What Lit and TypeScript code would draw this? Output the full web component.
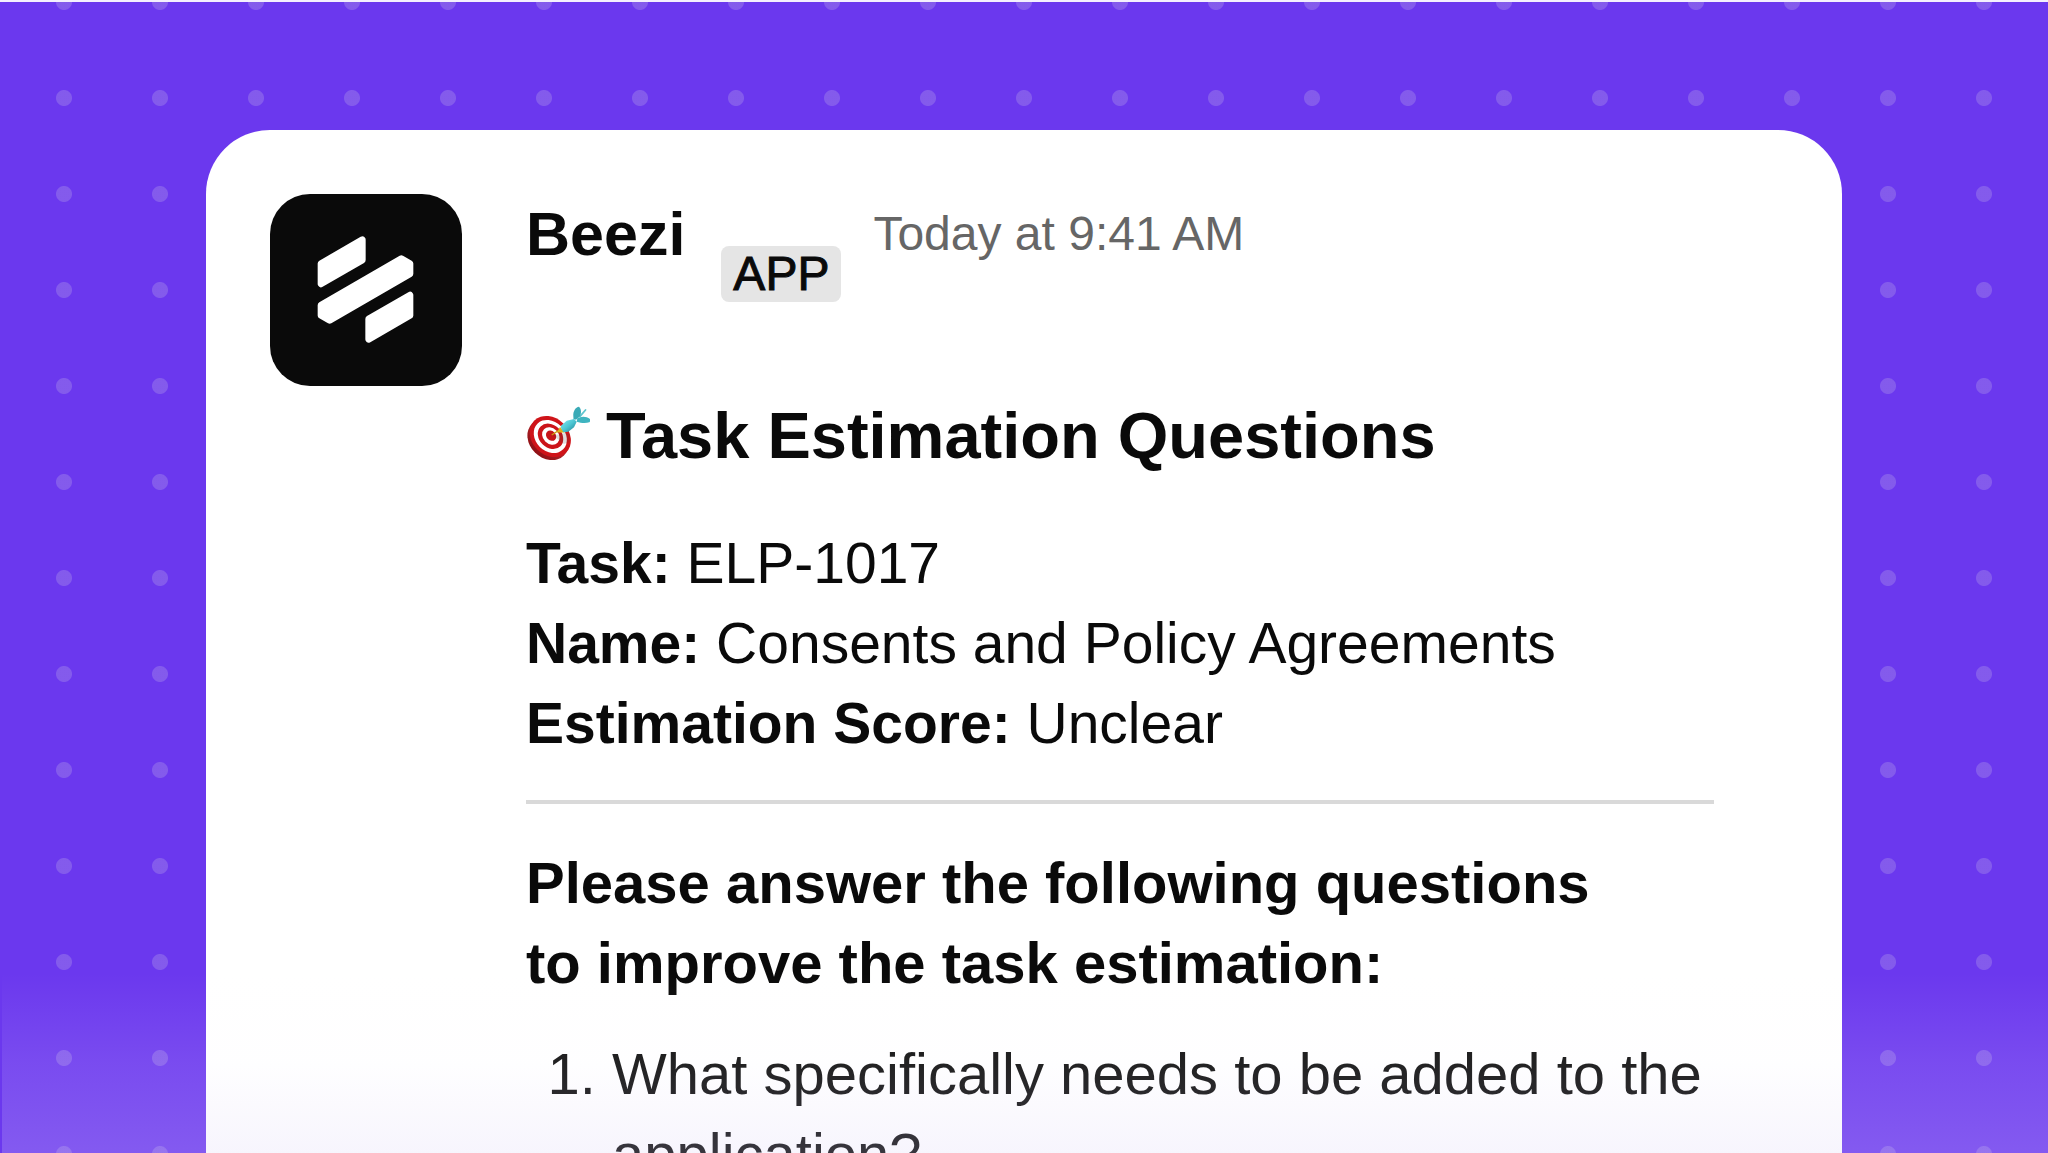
import { LitElement, html, css } from "lit";
import { customElement, property } from "lit/decorators.js";

@customElement("brand-mark")
class BrandMark extends LitElement {
  static styles = css`
    :host {
      display: block;
    }
    .tile {
      display: block;
      width: 100%;
      aspect-ratio: 1;
      border-radius: 40px;
      background: #0a0a0a;
    }
    .bars {
      fill: #fff;
      stroke: #fff;
      stroke-width: 20;
      stroke-linejoin: round;
    }
  `;

  render() {
    return html`
      <svg class="tile" viewBox="60 41 576 576" role="img" aria-label="Beezi">
        <g class="bars">
          <path d="M213 249.8 337 178.2V239.3L213 310.7Z" />
          <path d="M213 374.7 454 235 480 249.8V280.3L239 420 213 405.2Z" />
          <path d="M480 405.2 356 476.8V415.7L480 344.3Z" />
        </g>
      </svg>
    `;
  }
}

@customElement("target-icon")
class TargetIcon extends LitElement {
  static styles = css`
    :host {
      display: block;
      width: 64px;
      height: 64px;
      flex: none;
    }
    .icon {
      display: block;
      width: 100%;
      height: 100%;
    }
  `;

  render() {
    return html`
      <svg class="icon" viewBox="0 0 64 64" aria-hidden="true">
        <defs>
          <linearGradient id="rim" x1="0" y1="0" x2="0" y2="1">
            <stop offset="0" stop-color="#c93a3e" />
            <stop offset="1" stop-color="#8f0f14" />
          </linearGradient>
          <linearGradient id="shaft" x1="0" y1="0" x2="1" y2="1">
            <stop offset="0.1" stop-color="#7be3ec" />
            <stop offset="0.5" stop-color="#4cc6d3" />
            <stop offset="0.9" stop-color="#24899a" />
          </linearGradient>
        </defs>
        <ellipse cx="22" cy="35.5" rx="22.5" ry="18.5" transform="rotate(45 22 35.5)" fill="url(#rim)" />
        <g transform="rotate(45 24.3 32.5)">
          <ellipse cx="24.3" cy="32.5" rx="22.5" ry="18.5" fill="#cf1419" />
          <ellipse cx="24.3" cy="32.5" rx="18.2" ry="14.8" fill="#fff" />
          <ellipse cx="24.3" cy="32.2" rx="14" ry="11.3" fill="#cb1419" />
          <ellipse cx="24.3" cy="31.8" rx="9.6" ry="7.8" fill="#fff" />
          <ellipse cx="24.3" cy="31.4" rx="5.6" ry="4.6" fill="#c61419" />
        </g>
        <path d="M27 31.5 39 29 43.5 30 43 38 38 40Z" fill="#444" opacity=".18" />
        <path d="M25.7 31 34 25.5" stroke="#c99a10" stroke-width="1.4" />
        <path d="M31 28.5 34 23 39 28.4Z" fill="#dfb01a" />
        <path d="M35 21.7 40.7 16.7 48 15 50.7 17.7 48 23.3 42.3 27.7 37.3 28.3C36.5 26 34.5 25 35 21.7Z" fill="url(#shaft)" />
        <path d="M54 12.3 59.5 6" stroke="#5fc6cf" stroke-width="1.8" stroke-linecap="round" />
        <path d="M47.3 11.7C47 7.5 49.5 3 53 2.7 55.5 5 55.5 9 54 12.3L50 15.7 47.5 15Z" fill="#3aaab6" />
        <path d="M50.7 17.7 51.3 14.3C54 12.5 60 11.5 64 15 64.3 16.5 64 17.8 63.3 18.3 60 19.6 55 19.3 50.7 17.7Z" fill="#3fb4c0" />
      </svg>
    `;
  }
}

@customElement("detail-row")
class DetailRow extends LitElement {
  @property() label = "";
  @property() value = "";

  static styles = css`
    :host {
      display: block;
    }
    .label {
      font-weight: 700;
    }
  `;

  render() {
    return html`<span class="label">${this.label}:</span> ${this.value}`;
  }
}

@customElement("app-root")
class AppRoot extends LitElement {
  static styles = css`
    :host {
      display: block;
      font-family: "Liberation Sans", Arial, sans-serif;
      color: #0a0a0a;
    }
    * {
      box-sizing: border-box;
    }
    .stage {
      position: relative;
      display: flex;
      height: 100vh;
      overflow: hidden;
      padding: 128px 206px 0;
      border-top: 2px solid #f4f0fe;
      background-color: #6b38ee;
      background-image: radial-gradient(
        circle at center,
        rgba(229, 229, 229, 0.2) 7.5px,
        transparent 8.5px
      );
      background-size: 96px 96px;
      background-position: 16px -48px;
    }
    .fade {
      position: absolute;
      inset: auto 0 0 2px;
      height: 180px;
      background: linear-gradient(
        rgba(248, 246, 255, 0),
        rgba(248, 246, 255, 0.1) 50%,
        rgba(219, 210, 247, 0.22)
      );
      pointer-events: none;
    }
    .card {
      flex: 1;
      min-width: 0;
      min-height: 100%;
      display: grid;
      grid-template-columns: 192px minmax(0, 1fr);
      align-content: start;
      gap: 64px;
      padding: 64px;
      border-radius: 64px 64px 0 0;
      background: #fff;
    }
    .message {
      padding-right: 64px;
      font-size: 58px;
      line-height: 80px;
    }
    .header {
      display: flex;
      align-items: flex-start;
      margin-bottom: 94px;
    }
    .author {
      font-size: 61px;
      font-weight: 700;
      margin-right: 36px;
    }
    .badge {
      margin: 52px 32px 0 0;
      padding: 0 12px;
      border-radius: 8px;
      background: #e5e5e5;
      font-size: 48px;
      line-height: 56px;
      -webkit-text-stroke: 1px currentColor;
    }
    .time {
      font-size: 48px;
      color: #666;
    }
    .title {
      display: flex;
      align-items: center;
      gap: 16px;
      margin: 0 0 47px;
      font-size: 65px;
      line-height: 80px;
      font-weight: 700;
    }
    .details {
      font-size: 57px;
    }
    .rule {
      height: 4px;
      margin: 37px 0 39px;
      border: 0;
      background: #d9d9d9;
    }
    .prompt {
      margin: 0;
      font-weight: 700;
    }
    .questions {
      margin: 31px 0 0;
      padding-left: 86px;
    }
  `;

  render() {
    return html`
      <main class="stage">
        <article class="card">
          <brand-mark></brand-mark>
          <div class="message">
            <header class="header">
              <span class="author">Beezi</span>
              <span class="badge">APP</span>
              <time class="time">Today at 9:41 AM</time>
            </header>
            <h1 class="title"><target-icon></target-icon>Task Estimation Questions</h1>
            <div class="details">
              <detail-row label="Task" value="ELP-1017"></detail-row>
              <detail-row label="Name" value="Consents and Policy Agreements"></detail-row>
              <detail-row label="Estimation Score" value="Unclear"></detail-row>
            </div>
            <hr class="rule" />
            <p class="prompt">Please answer the following questions<br />to improve the task estimation:</p>
            <ol class="questions">
              <li>What specifically needs to be added to the application?</li>
            </ol>
          </div>
        </article>
        <div class="fade"></div>
      </main>
    `;
  }
}
